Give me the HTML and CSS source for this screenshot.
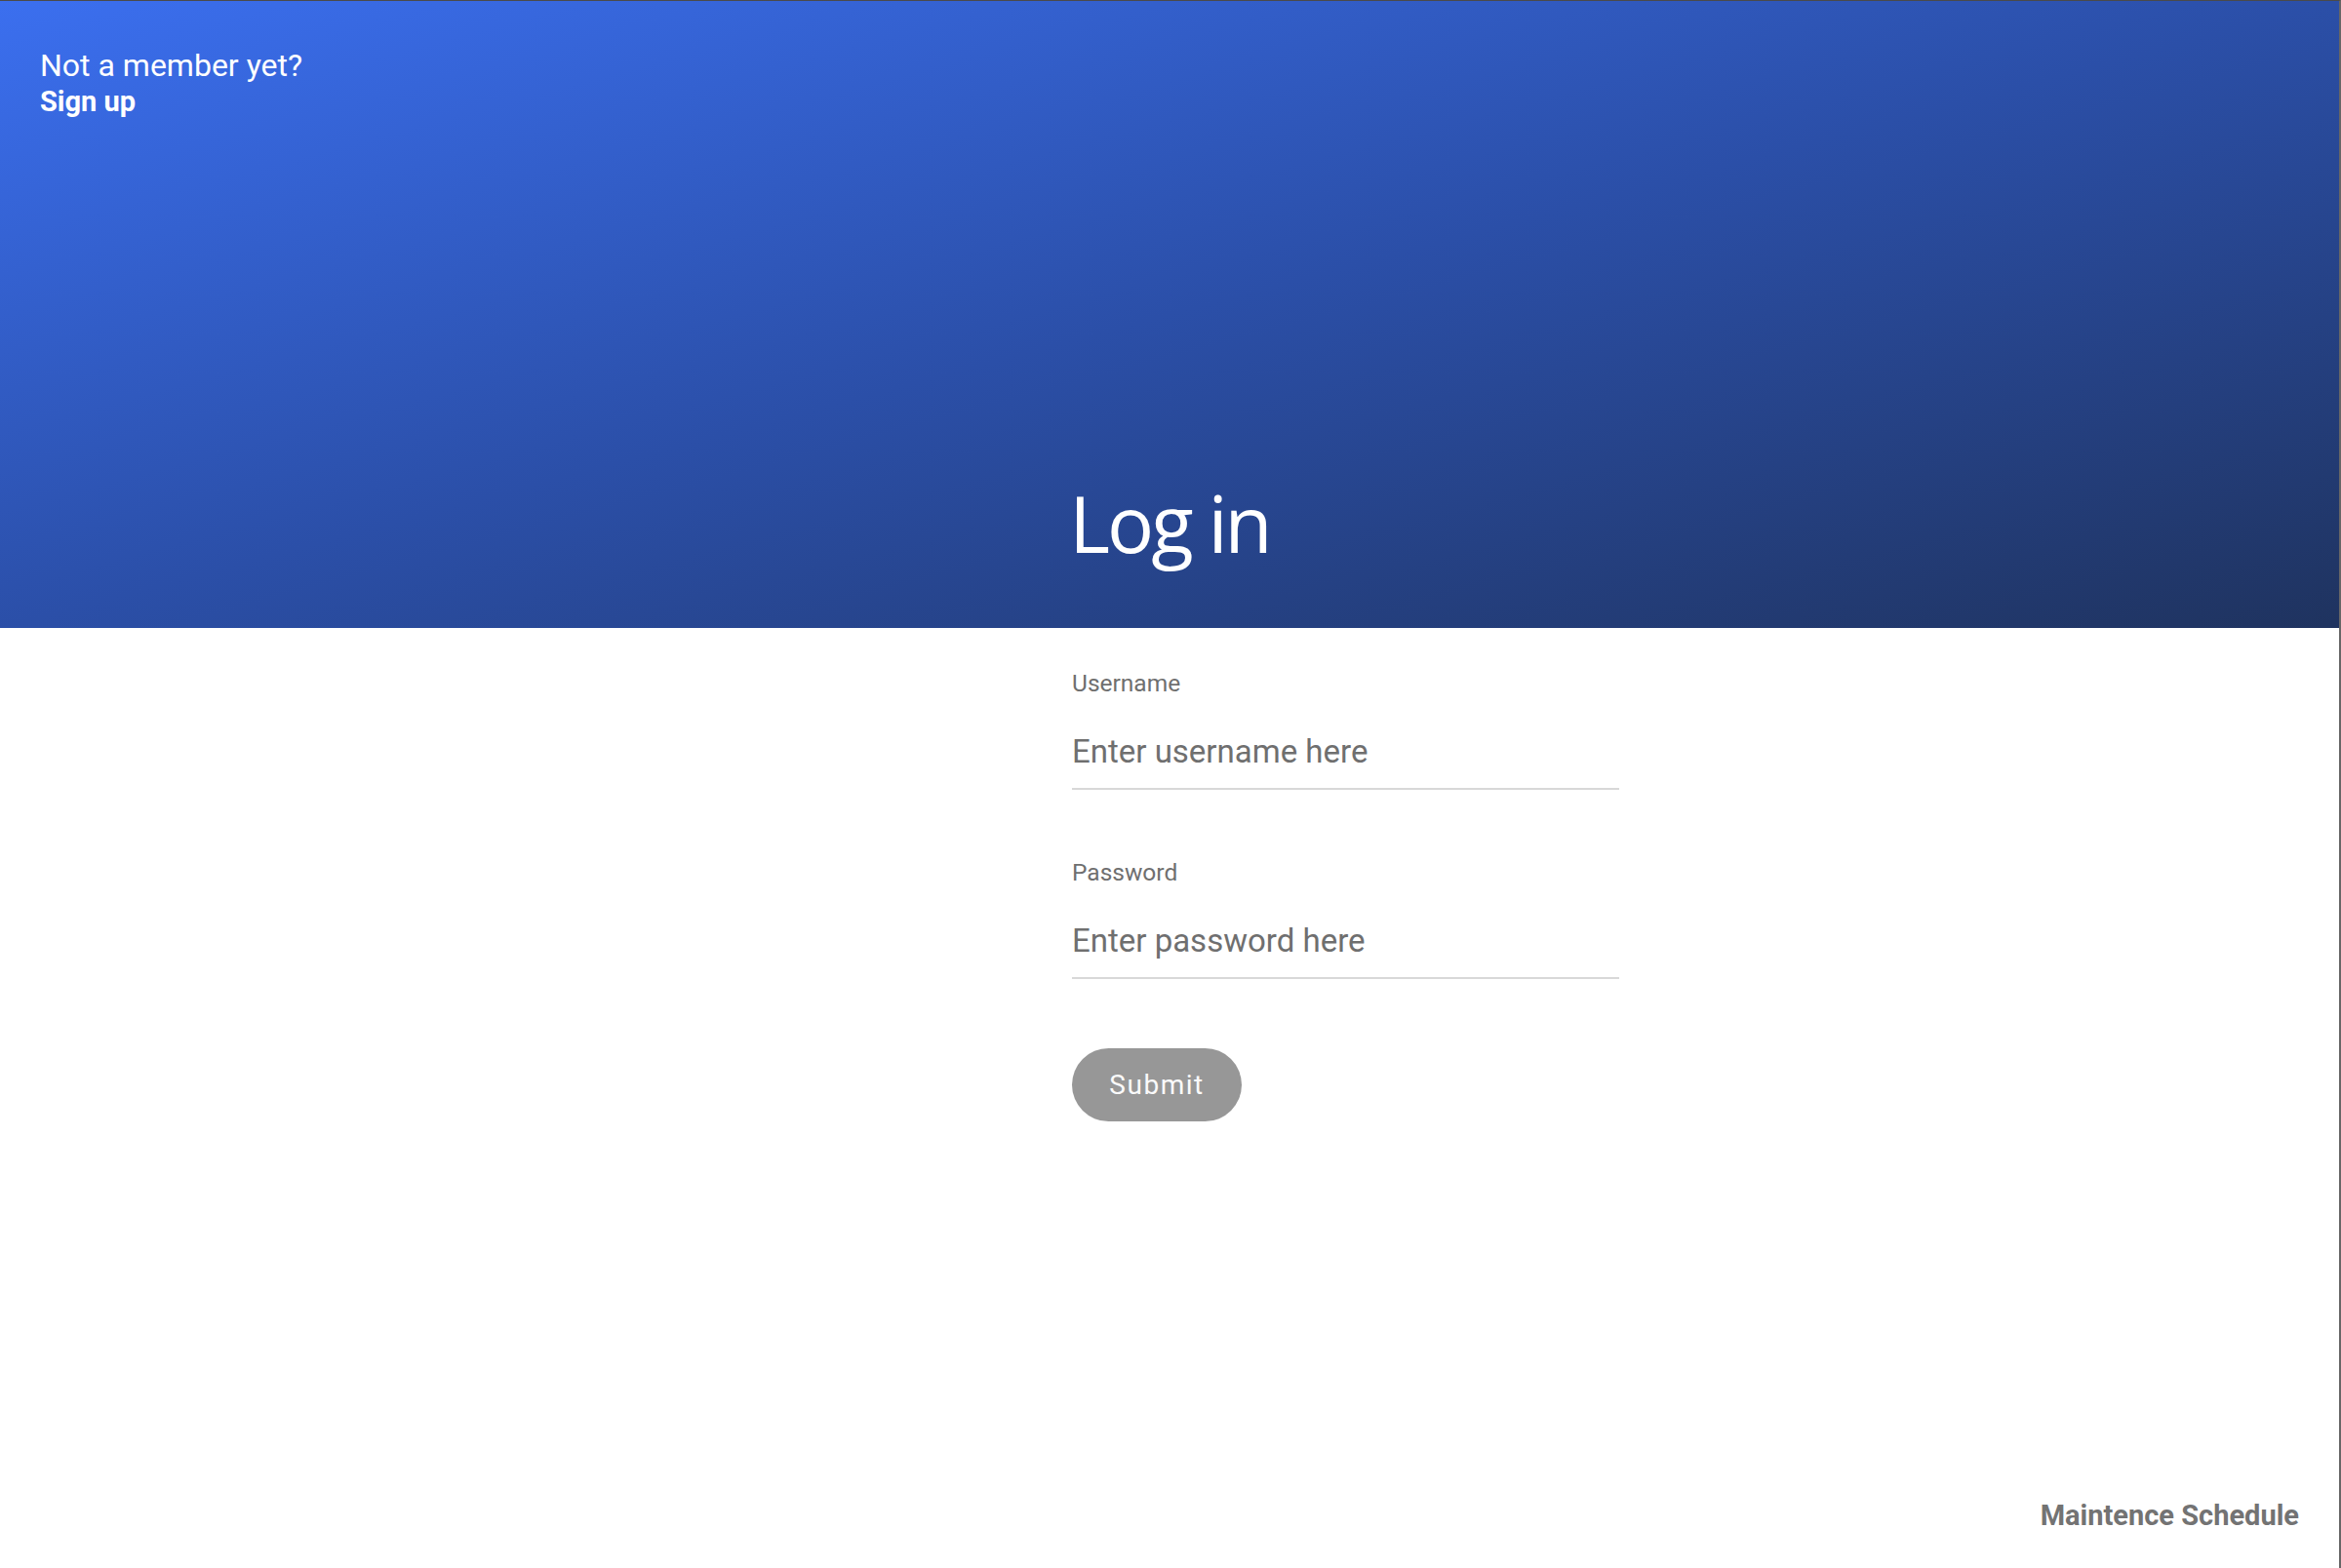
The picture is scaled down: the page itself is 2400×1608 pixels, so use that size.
FILE: index.html
```html
<!DOCTYPE html>
<html lang="en">
<head>
    <meta charset="UTF-8">
    <meta name="viewport" content="width=device-width, initial-scale=1.0">
    <title>Log in</title>
    <link rel="stylesheet" href="styles.css">
</head>
<body>

<div class="page">
    <header class="hero">
        <div class="member">
            <p class="member-text">Not a member yet?</p>
            <a class="member-link" href="#">Sign up</a>
        </div>
        <h1 class="hero-title">Log in</h1>
    </header>

    <form class="login-form" onsubmit="return false;">
        <div class="field">
            <label for="username">Username</label>
            <input id="username" name="username" type="text" placeholder="Enter username here">
        </div>
        <div class="field">
            <label for="password">Password</label>
            <input id="password" name="password" type="password" placeholder="Enter password here">
        </div>
        <button class="submit-btn" type="submit">Submit</button>
    </form>

    <footer class="page-footer">
        <a href="#">Maintence Schedule</a>
    </footer>
</div>

</body>
</html>
```

FILE: styles.css
```css
body {
    margin: 0;
    padding: 0;
    font-family: Roboto, "Liberation Sans", Arial, sans-serif;
    background-color: #fff;
}

.page {
    box-sizing: border-box;
    min-height: 100vh;
    display: flex;
    flex-direction: column;
    border-top: 1px solid #4a4a4a;
    border-right: 2px solid #666;
}

.hero {
    height: 643px;
    box-sizing: border-box;
    padding: 47px 41px 0;
    display: flex;
    flex-direction: column;
    background: linear-gradient(to bottom right, #3b6fef, #2b4fa8 50%, #1f335f);
    color: #fff;
}

.member-text {
    margin: 0;
    font-size: 32px;
    line-height: 38px;
}

.member-link {
    display: block;
    margin-top: 2px;
    font-size: 29px;
    line-height: 32px;
    font-weight: bold;
    color: #fff;
    text-decoration: none;
}

.hero-title {
    margin: auto 0 68px;
    font-family: "Open Sans", "Noto Sans", sans-serif;
    font-size: 80px;
    line-height: 80px;
    font-weight: normal;
    letter-spacing: -3px;
    text-align: center;
}

.login-form {
    width: 561px;
    margin-left: calc(50% - 100px);
    padding-top: 42px;
}

.field {
    margin-bottom: 70px;
}

.field label {
    display: block;
    font-size: 24.5px;
    line-height: 30px;
    color: #6f6f6f;
}

.field input {
    display: block;
    box-sizing: content-box;
    width: 100%;
    height: 40px;
    margin: 0;
    padding: 35px 0 17px;
    border: none;
    border-bottom: 2px solid #d8d8d8;
    outline: none;
    background: transparent;
    font-family: inherit;
    font-size: 33px;
    line-height: 40px;
    color: #333;
}

.field input::placeholder {
    color: #6f6f6f;
    opacity: 1;
}

.field:last-of-type {
    margin-bottom: 71px;
}

.submit-btn {
    width: 174px;
    height: 75px;
    margin-top: 0;
    padding: 0;
    border: none;
    border-radius: 38px;
    background-color: #979797;
    color: #fafafa;
    font-family: inherit;
    font-size: 28px;
    letter-spacing: 1.5px;
    cursor: pointer;
}

.submit-btn:hover {
    background-color: #888;
}

.page-footer {
    margin-top: auto;
    padding: 0 41px 38px;
    text-align: right;
}

.page-footer a {
    font-size: 29px;
    line-height: 32px;
    font-weight: bold;
    color: #737373;
    text-decoration: none;
}
```
